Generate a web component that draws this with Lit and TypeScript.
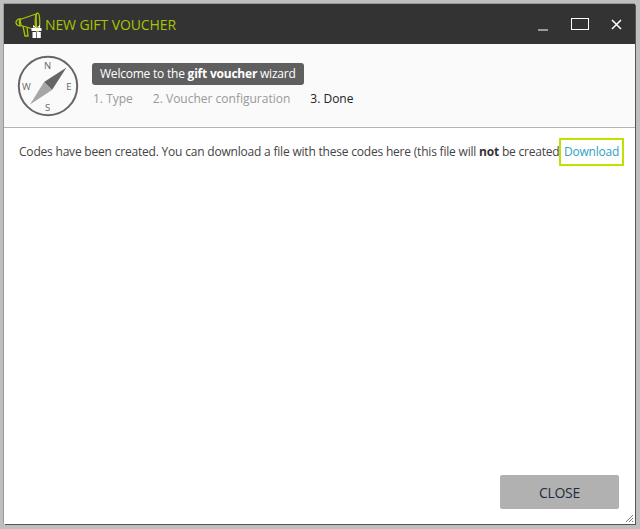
import { LitElement, html, css, svg } from "lit";
import { customElement } from "lit/decorators.js";

@customElement("app-root")
export class AppRoot extends LitElement {
  static styles = css`
    :host {
      display: block;
      width: 640px;
      height: 529px;
      box-sizing: border-box;
      padding: 4px 5px 5px 4px;
      background-color: #d4d4d4;
      background-image: radial-gradient(#bdbdbd 0.7px, transparent 0.8px);
      background-size: 2px 2px;
      font-family: "Open Sans", "Liberation Sans", sans-serif;
      overflow: hidden;
    }
    .win {
      position: relative;
      height: 100%;
      display: flex;
      flex-direction: column;
      background: #fff;
      box-shadow: 1px 1px 0 #555, -0.5px -0.5px 0 #777;
    }
    .bar {
      height: 40px;
      flex: none;
      display: flex;
      align-items: center;
      background: #333333;
      color: #a9c400;
      padding-left: 8px;
      font-size: 14px;
    }
    .logo { width: 30px; height: 30px; margin-right: 3px; margin-top: 1px; flex: none; }
    .title { flex: 1; letter-spacing: -0.1px; }
    .controls { display: flex; align-items: center; }
    .controls svg { display: block; }
    .min { width: 11px; height: 14px; margin-right: 22px; }
    .max { width: 18px; height: 12px; margin-right: 22px; }
    .close { width: 11px; height: 11px; margin-right: 13px; }
    .head {
      height: 84px;
      flex: none;
      box-sizing: border-box;
      display: flex;
      align-items: center;
      padding: 0 0 0 13px;
      background: #fafafa;
      border-bottom: 1px solid #b4b4b4;
    }
    .compass { width: 62px; height: 62px; margin-right: 13px; flex: none; }
    .steps-col { display: flex; flex-direction: column; align-items: flex-start; gap: 4px; margin-top: 1px; }
    .welcome {
      background: #5f5f5f;
      color: #fff;
      font-size: 12px;
      line-height: 22px;
      height: 22px;
      padding: 0 8px;
      border-radius: 3px;
      letter-spacing: -0.22px;
    }
    .steps {
      display: flex;
      gap: 20px;
      font-size: 12px;
      line-height: 20px;
      color: #999999;
      padding-left: 1px;
    }
    .steps .on { color: #222; margin-left: 0; }
    .body {
      flex: 1;
      position: relative;
      padding: 14px 0 0 15px;
      font-size: 12px;
      line-height: 20px;
      color: #444;
      letter-spacing: -0.2px;
      white-space: nowrap;
    }
    .body b { color: #333; }
    .dl {
      position: absolute;
      left: 555px;
      top: 10px;
      width: 65px;
      height: 28px;
      box-sizing: border-box;
      border: 2px solid #bfe000;
      background: #fff;
      color: #2f9fc4;
      text-align: center;
      line-height: 24px;
    }
    .foot {
      flex: none;
      display: flex;
      justify-content: flex-end;
      padding: 0 16px 15px 0;
    }
    .btn {
      width: 119px;
      height: 34px;
      border-radius: 2px;
      background: #b1b1b1;
      color: #1f2d3d;
      font-size: 14px;
      letter-spacing: -0.3px;
      display: flex;
      align-items: center;
      justify-content: center;
    }
    .grip { position: absolute; right: 1px; bottom: 1px; width: 10px; height: 10px; }
  `;

  logo() {
    return svg`<svg class="logo" viewBox="0 0 30 30" fill="none">
      <path d="M8 9.5 L24 4 L24.5 20 L9 15.5 Z" stroke="#a9c400" stroke-width="1.3" stroke-linejoin="round"/>
      <path d="M8.5 9 C3 8.5 2 16 8.5 15.8 C7 13.5 7 11 8.5 9 Z" stroke="#a9c400" stroke-width="1.3"/>
      <path d="M29 3 C32 3 32 22 29 22 C26 22 26 3 29 3 Z" transform="translate(-3.5 0) scale(1 1)" stroke="#a9c400" stroke-width="1.3"/>
      <path d="M11 16 L13 26 L16 26 L15 17" stroke="#a9c400" stroke-width="1.3"/>
      <g fill="#fff">
        <rect x="19.5" y="18" width="10" height="3"/>
        <rect x="20.5" y="22" width="3.8" height="6"/>
        <rect x="25" y="22" width="3.8" height="6"/>
        <path d="M21 15 L24.4 17.6 L21 17.6 Z M28 15 L24.6 17.6 L28 17.6 Z"/>
      </g>
    </svg>`;
  }

  compass() {
    return svg`<svg class="compass" viewBox="0 0 62 62">
      <circle cx="31" cy="31" r="29.2" fill="none" stroke="#666" stroke-width="2"/>
      <path d="M49.5 12.5 L35 35 L27 27 Z" fill="#666"/>
      <path d="M13 49.5 L27 27 L35 35 Z" fill="#a6a6a6"/>
      <path d="M27 27 L35 27 L35 35 Z" fill="#666" opacity="0"/>
      <g font-family="Open Sans, sans-serif" font-size="9.5" fill="#666" text-anchor="middle">
        <text x="30.5" y="14">N</text>
        <text x="9.5" y="34.5">W</text>
        <text x="52" y="34.5">E</text>
        <text x="30.5" y="55.5">S</text>
      </g>
    </svg>`;
  }

  render() {
    return html`<div class="win">
      <div class="bar">
        ${this.logo()}
        <div class="title">NEW GIFT VOUCHER</div>
        <div class="controls">
          <svg class="min" viewBox="0 0 11 14"><rect x="0" y="12.5" width="10" height="1" fill="#fff"/></svg>
          <svg class="max" viewBox="0 0 18 12"><rect x="0.5" y="0.5" width="17" height="11" fill="none" stroke="#fff"/></svg>
          <svg class="close" viewBox="0 0 11 11"><path d="M1 1 L10 10 M10 1 L1 10" stroke="#fff" stroke-width="1.5"/></svg>
        </div>
      </div>
      <div class="head">
        ${this.compass()}
        <div class="steps-col">
          <div class="welcome">Welcome to the <b>gift voucher</b> wizard</div>
          <div class="steps">
            <span>1. Type</span><span>2. Voucher configuration</span><span class="on">3. Done</span>
          </div>
        </div>
      </div>
      <div class="body">
        Codes have been created. You can download a file with these codes here (this file will <b>not</b> be created again)
        <div class="dl">Download</div>
      </div>
      <div class="foot"><div class="btn">CLOSE</div></div>
      <svg class="grip" viewBox="0 0 10 10"><path d="M9 2 L2 9 M9 5 L5 9 M9 8 L8 9" stroke="#777" stroke-width="1"/></svg>
    </div>`;
  }
}
